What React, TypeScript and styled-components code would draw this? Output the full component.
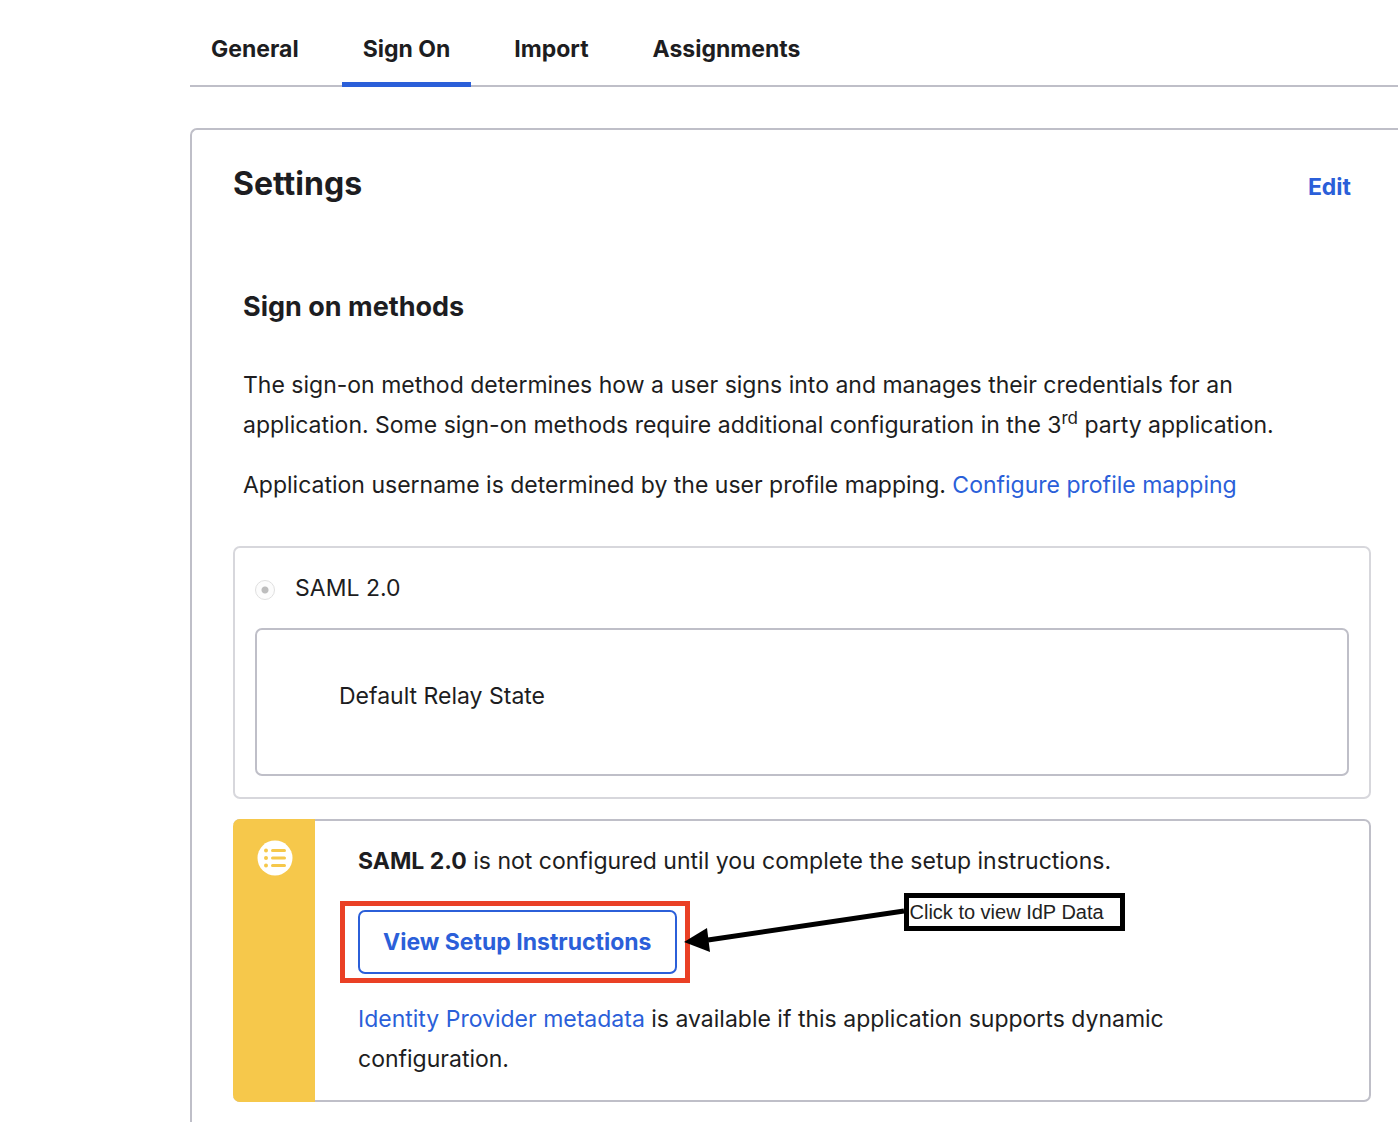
import React from "react";
import styled, { createGlobalStyle, css } from "styled-components";

const color = {
  text: "#1d1d21",
  link: "#2b5fd9",
  border: "#bfbfc8",
  borderLight: "#d7d7dc",
  warning: "#f6c84b",
  mark: "#ea4025",
};

const GlobalStyle = createGlobalStyle`
  *, *::before, *::after { box-sizing: border-box; }
  body {
    margin: 0;
    background: #fff;
    color: ${color.text};
    font: 400 23px/40px Inter, "Liberation Sans", sans-serif;
  }
  button { font: inherit; cursor: pointer; }
`;

const Page = styled.main`
  display: flex;
  flex-direction: column;
  min-height: 100vh;
  padding-left: 190px;
`;

const Tabs = styled.nav`
  display: flex;
  gap: 22px;
  padding-top: 29px;
  margin-bottom: 41px;
  box-shadow: inset 0 -2px ${color.border};
`;

const Tab = styled.a<{ $active?: boolean }>`
  padding: 0 21px 13px;
  border-bottom: 5px solid ${(p) => (p.$active ? color.link : "transparent")};
  color: inherit;
  font-weight: 700;
  text-decoration: none;
`;

const Panel = styled.section`
  flex: 1;
  padding: 33px 27px 20px 41px;
  border: solid ${color.border};
  border-width: 2px 0 0 2px;
  border-top-left-radius: 7px;
`;

const PanelHeader = styled.header`
  display: flex;
  align-items: flex-start;
  justify-content: space-between;
  padding-right: 20px;
  margin-bottom: 80px;
`;

const Title = styled.h1`
  margin: 0;
  font-size: 32px;
  line-height: 42px;
  font-weight: 700;
`;

const EditButton = styled.button`
  padding: 4px 0 0;
  border: 0;
  background: none;
  color: ${color.link};
  font-weight: 700;
`;

const Intro = styled.div`
  padding: 0 10px;
  margin-bottom: 41px;
`;

const Subtitle = styled.h2`
  margin: 0 0 38px;
  font-size: 27px;
  line-height: 40px;
  font-weight: 700;
`;

const Text = styled.p`
  margin: 0 0 20px;

  &:last-child { margin-bottom: 0; }
`;

const Sup = styled.sup`
  font-size: 17px;
  line-height: 0;
`;

const Link = styled.a`
  color: ${color.link};
  text-decoration: none;
`;

const Strong = styled.strong`
  font-weight: 700;
`;

const box = css`
  border: 2px solid ${color.border};
  border-radius: 7px;
`;

const MethodBox = styled.div`
  ${box}
  border-color: ${color.borderLight};
  padding: 20px 20px 21px;
  margin-bottom: 20px;
`;

const MethodLabel = styled.label`
  display: flex;
  align-items: center;
  gap: 20px;
  margin-bottom: 20px;
`;

const Radio = styled.input`
  appearance: none;
  width: 20px;
  height: 20px;
  margin: 4px 0 0;
  border: 1px solid #e0e0e0;
  border-radius: 50%;
  background: radial-gradient(circle, #bdbdbd 3px, #fcfcfc 4px);
`;

const RelayBox = styled.div`
  ${box}
  padding: 46px 82px 58px;
`;

const Callout = styled.aside`
  display: flex;
  ${box}
  border-left: 0;
`;

const CalloutBand = styled.div`
  flex: 0 0 82px;
  margin: -2px 0;
  padding: 21px 0 0 24px;
  border-radius: 7px 0 0 7px;
  background: ${color.warning};
`;

const CalloutBody = styled.div`
  flex: 1;
  padding: 20px 63px 21px 43px;
`;

const Action = styled.div`
  position: relative;
  width: fit-content;
  margin: 29px 0 25px;
`;

const SetupButton = styled.button`
  display: block;
  padding: 10px 23px;
  border: 2px solid ${color.link};
  border-radius: 7px;
  background: #fff;
  color: ${color.link};
  font-weight: 700;
`;

const Highlight = styled.span`
  position: absolute;
  inset: -9px -13px -9px -18px;
  border: 5px solid ${color.mark};
  pointer-events: none;
`;

const Arrow = styled.svg`
  position: absolute;
  left: calc(100% + 7px);
  top: -6px;
`;

const Note = styled.span`
  position: absolute;
  left: calc(100% + 227px);
  top: -17px;
  width: 221px;
  padding: 0 1px;
  border: 5px solid #000;
  background: #fff;
  color: #222;
  font: 20px/28px "Liberation Sans", Arial, sans-serif;
  white-space: nowrap;
`;

const ListIcon = () => (
  <svg width="36" height="36" viewBox="0 0 36 36" aria-hidden="true">
    <circle cx="18" cy="18" r="17.5" fill="#fff" />
    {[10.5, 18, 25.5].map((y) => (
      <g key={y} stroke={color.warning} strokeWidth="3" strokeLinecap="round">
        <circle cx="9" cy={y} r="2" fill={color.warning} stroke="none" />
        <path d={`M15.5 ${y}H27.5`} />
      </g>
    ))}
  </svg>
);

const tabs = ["General", "Sign On", "Import", "Assignments"];

export default function App() {
  return (
    <>
      <GlobalStyle />
      <Page>
        <Tabs aria-label="Application">
          {tabs.map((name) => (
            <Tab
              key={name}
              href="#"
              $active={name === "Sign On"}
              aria-current={name === "Sign On" ? "page" : undefined}
            >
              {name}
            </Tab>
          ))}
        </Tabs>

        <Panel>
          <PanelHeader>
            <Title>Settings</Title>
            <EditButton type="button">Edit</EditButton>
          </PanelHeader>

          <Intro>
            <Subtitle>Sign on methods</Subtitle>
            <Text>
              The sign-on method determines how a user signs into and manages
              their credentials for an application. Some sign-on methods require
              additional configuration in the 3<Sup>rd</Sup> party application.
            </Text>
            <Text>
              Application username is determined by the user profile mapping.{" "}
              <Link href="#">Configure profile mapping</Link>
            </Text>
          </Intro>

          <MethodBox>
            <MethodLabel htmlFor="saml">
              <Radio id="saml" type="radio" name="method" defaultChecked disabled />
              SAML 2.0
            </MethodLabel>
            <RelayBox>Default Relay State</RelayBox>
          </MethodBox>

          <Callout>
            <CalloutBand>
              <ListIcon />
            </CalloutBand>
            <CalloutBody>
              <Text>
                <Strong>SAML 2.0</Strong> is not configured until you complete
                the setup instructions.
              </Text>
              <Action>
                <SetupButton type="button">View Setup Instructions</SetupButton>
                <Highlight />
                <Arrow width="222" height="52" viewBox="0 0 222 52" aria-hidden="true">
                  <path d="M24 36L220 7" stroke="#000" strokeWidth="5" />
                  <path d="M0 38L23 24L26 48Z" />
                </Arrow>
                <Note>Click to view IdP Data</Note>
              </Action>
              <Text>
                <Link href="#">Identity Provider metadata</Link> is available if
                this application supports dynamic configuration.
              </Text>
            </CalloutBody>
          </Callout>
        </Panel>
      </Page>
    </>
  );
}
